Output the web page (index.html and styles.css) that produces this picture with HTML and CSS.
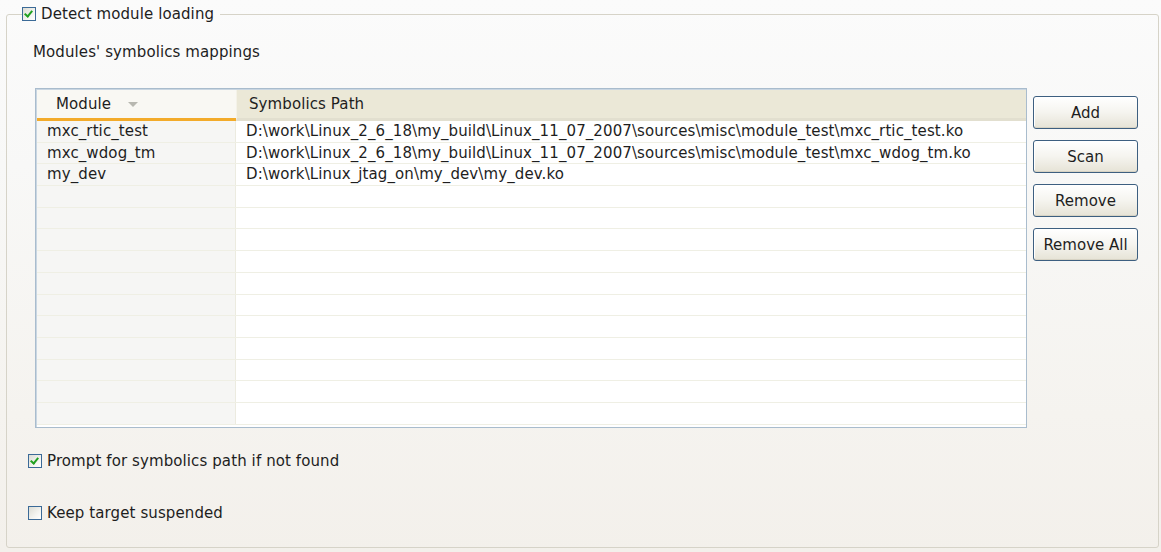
FILE: index.html
```html
<!DOCTYPE html>
<html>
<head>
<meta charset="utf-8">
<link rel="stylesheet" href="styles.css">
</head>
<body>
<fieldset class="group">
  <legend class="group-title">
    <label class="check"><span class="box on"></span><span>Detect module loading</span></label>
  </legend>
  <div class="caption">Modules' symbolics mappings</div>
  <div class="mapping">
    <div class="table">
      <div class="thead">
        <div class="th th-module">Module <span class="sort"></span></div>
        <div class="th th-path">Symbolics Path</div>
      </div>
      <div class="tbody">
        <div class="row"><div class="td td-module">mxc_rtic_test</div><div class="td td-path">D:\work\Linux_2_6_18\my_build\Linux_11_07_2007\sources\misc\module_test\mxc_rtic_test.ko</div></div>
        <div class="row"><div class="td td-module">mxc_wdog_tm</div><div class="td td-path">D:\work\Linux_2_6_18\my_build\Linux_11_07_2007\sources\misc\module_test\mxc_wdog_tm.ko</div></div>
        <div class="row"><div class="td td-module">my_dev</div><div class="td td-path">D:\work\Linux_jtag_on\my_dev\my_dev.ko</div></div>
        <div class="row"><div class="td td-module"></div><div class="td td-path"></div></div>
        <div class="row"><div class="td td-module"></div><div class="td td-path"></div></div>
        <div class="row"><div class="td td-module"></div><div class="td td-path"></div></div>
        <div class="row"><div class="td td-module"></div><div class="td td-path"></div></div>
        <div class="row"><div class="td td-module"></div><div class="td td-path"></div></div>
        <div class="row"><div class="td td-module"></div><div class="td td-path"></div></div>
        <div class="row"><div class="td td-module"></div><div class="td td-path"></div></div>
        <div class="row"><div class="td td-module"></div><div class="td td-path"></div></div>
        <div class="row"><div class="td td-module"></div><div class="td td-path"></div></div>
        <div class="row"><div class="td td-module"></div><div class="td td-path"></div></div>
        <div class="row"><div class="td td-module"></div><div class="td td-path"></div></div>
      </div>
    </div>
    <div class="buttons">
      <button class="btn">Add</button>
      <button class="btn">Scan</button>
      <button class="btn">Remove</button>
      <button class="btn">Remove All</button>
    </div>
  </div>
  <label class="check opt opt-prompt"><span class="box on"></span><span>Prompt for symbolics path if not found</span></label>
  <label class="check opt opt-keep"><span class="box"></span><span>Keep target suspended</span></label>
</fieldset>
</body>
</html>
```
FILE: styles.css
```css
html, body {
  margin: 0;
  height: 100%;
}

body {
  width: 1161px;
  height: 552px;
  overflow: hidden;
  background: linear-gradient(to bottom, #fbfbfb 0%, #f8f8f7 30%, #f5f3ef 75%, #f3f0eb 100%);
  font-family: "DejaVu Sans", Verdana, sans-serif;
  font-size: 15px;
  letter-spacing: 0.1px;
  color: #1e1e1e;
}

/* group box with checkbox title */
.group {
  margin: 5px 2px 0 6px;
  padding: 0 0 0 20px;
  height: 543px;
  box-sizing: border-box;
  border: 1px solid #d6d3c8;
  border-radius: 3px;
}

.group-title {
  padding: 0 6px 0 0;
  margin-left: -5px;
  height: 18px;
  line-height: 18px;
}

.check {
  display: flex;
  align-items: center;
  gap: 5px;
  height: 18px;
  line-height: 18px;
  white-space: nowrap;
}

.box {
  width: 12px;
  height: 12px;
  border: 1px solid #3b6a97;
  background: linear-gradient(135deg, #dcdcd4 0%, #f4f4f0 60%, #ffffff 100%);
  flex: none;
  position: relative;
}

.box.on::after {
  content: "";
  position: absolute;
  left: 3px;
  top: 1px;
  width: 3px;
  height: 6px;
  border-right: 2px solid #21a121;
  border-bottom: 2px solid #21a121;
  transform: rotate(40deg);
}

.caption {
  margin: 20px 0 0 6px;
  height: 18px;
  line-height: 18px;
}

/* table + buttons */
.mapping {
  display: flex;
  gap: 6px;
  margin: 27px 0 0 8px;
}

.table {
  width: 990px;
  height: 338px;
  border: 1px solid #a9bccd;
  box-shadow: inset 1px 1px 0 #c9d6e2;
  background: #fff;
  overflow: hidden;
  box-sizing: content-box;
}

.thead {
  display: flex;
  height: 31px;
  margin: 1px 0 0 1px;
}

.th {
  line-height: 28px;
  box-sizing: border-box;
  white-space: nowrap;
}

.th-module {
  width: 199px;
  padding-left: 19px;
  background: #f9f8f3;
  border-bottom: 3px solid #f3ab2a;
}

.sort {
  display: inline-block;
  width: 0;
  height: 0;
  margin-left: 12px;
  border-left: 5px solid transparent;
  border-right: 5px solid transparent;
  border-top: 5px solid #b8b8b0;
  vertical-align: 2px;
}

.th-path {
  flex: 1;
  padding-left: 12px;
  background: #ebe8d7;
  border-bottom: 3px solid #e2dfcf;
  border-left: 1px solid #f4f2e8;
}

.tbody {
  margin-left: 1px;
}

.row {
  display: flex;
  height: 21.7px;
  border-bottom: 1px solid #efefe4;
  box-sizing: border-box;
}

.td {
  line-height: 21px;
  white-space: nowrap;
  padding-left: 10px;
  box-sizing: border-box;
}

.td-module {
  width: 199px;
  background: #f6f6f4;
  border-right: 1px solid #ecebe0;
}

.td-path {
  flex: 1;
  background: #fff;
}

.buttons {
  display: flex;
  flex-direction: column;
  gap: 11px;
  padding-top: 8px;
}

.btn {
  width: 105px;
  height: 33px;
  font: inherit;
  color: #1e1e1e;
  border: 1px solid #3d5f80;
  border-radius: 3px;
  background: linear-gradient(to bottom, #ffffff 0%, #f5f4ef 50%, #e6e3d6 100%);
  box-shadow: inset 0 -1px 0 #d7d3c4, inset 1px 1px 0 #ffffff;
  padding: 0;
}

/* bottom options */
.opt {
  margin-left: 1px;
}

.opt-prompt {
  margin-top: 24px;
}

.opt-keep {
  margin-top: 34px;
}
```
